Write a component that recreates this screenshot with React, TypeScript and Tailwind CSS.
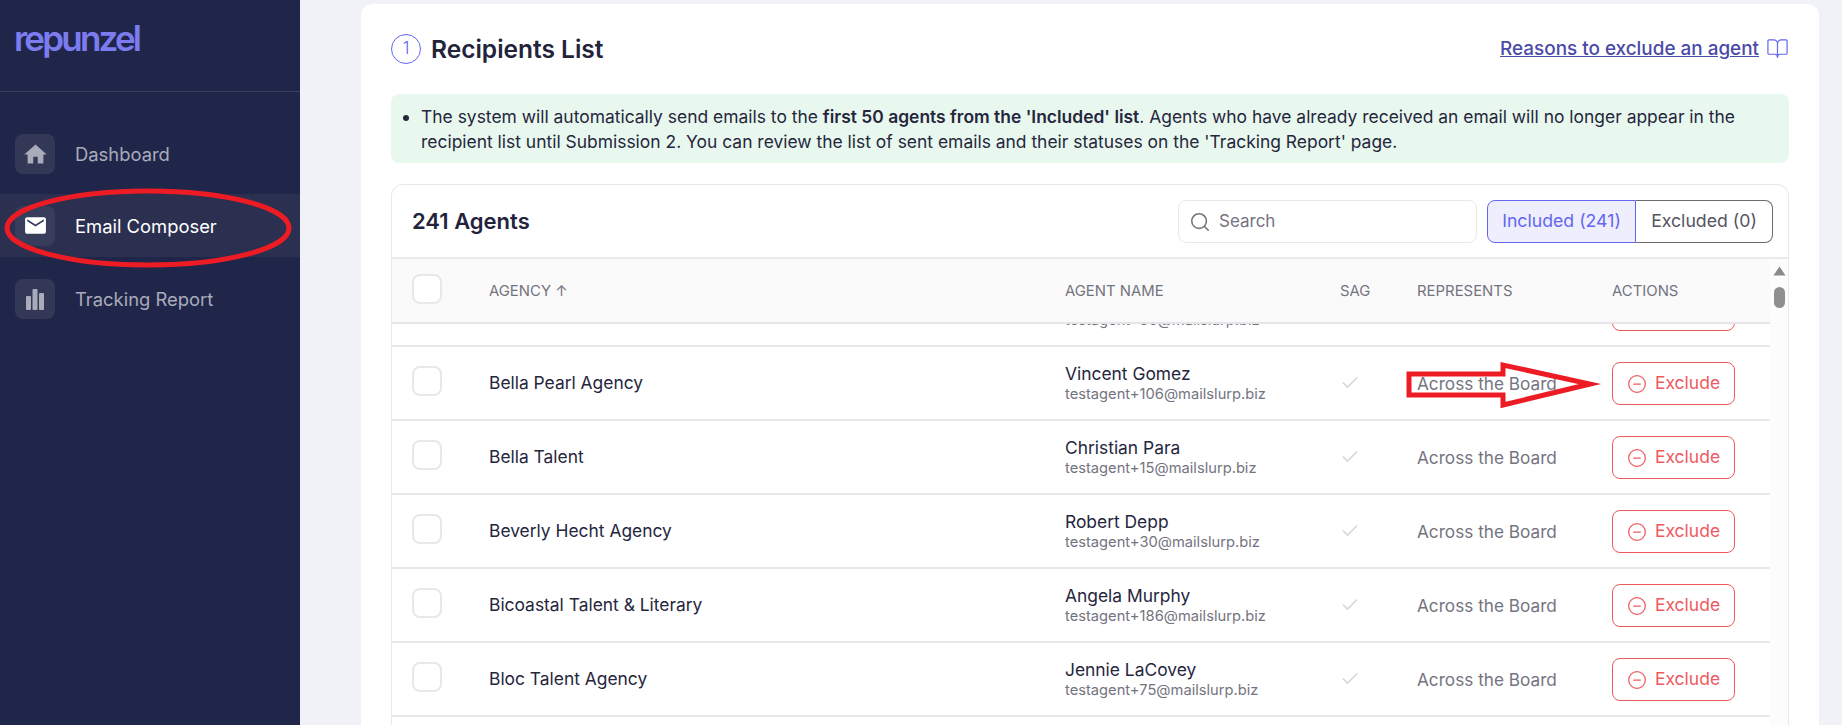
import { BookOpen, Check, CircleMinus, Search } from 'lucide-react';
import { MdEmail, MdHome } from 'react-icons/md';

const agents = [
  { agency: 'Bella Agency', name: 'Maria Lopez', email: 'testagent+56@mailslurp.biz' },
  { agency: 'Bella Pearl Agency', name: 'Vincent Gomez', email: 'testagent+106@mailslurp.biz' },
  { agency: 'Bella Talent', name: 'Christian Para', email: 'testagent+15@mailslurp.biz' },
  { agency: 'Beverly Hecht Agency', name: 'Robert Depp', email: 'testagent+30@mailslurp.biz' },
  { agency: 'Bicoastal Talent & Literary', name: 'Angela Murphy', email: 'testagent+186@mailslurp.biz' },
  { agency: 'Bloc Talent Agency', name: 'Jennie LaCovey', email: 'testagent+75@mailslurp.biz' },
];

const columns = 'grid grid-cols-[97px_576px_275px_77px_195px_160px] items-center';

function BarsIcon() {
  return (
    <svg width="20" height="22" viewBox="0 0 20 22" fill="currentColor">
      <rect x="1" y="8" width="5" height="14" rx="1" />
      <rect x="7.5" y="1" width="5" height="21" rx="1" />
      <rect x="14" y="5" width="5" height="17" rx="1" />
    </svg>
  );
}

function Sidebar() {
  return (
    <aside className="w-[300px] shrink-0 bg-[#20264a]">
      <div className="h-[92px] border-b border-[#3a3f5f] pl-[14px] pt-[13px]">
        <span className="text-[35px] font-semibold leading-[50px] tracking-[-2.8px] text-[#7c7cf0]">repunzel</span>
      </div>
      <nav className="pt-[42px] text-[18.4px] leading-[28px]">
        <div className="flex h-[40px] items-center gap-5 pl-[15px] text-[#a9abba]">
          <span className="flex h-10 w-10 items-center justify-center rounded-lg bg-[#333857]">
            <MdHome size={27} />
          </span>
          Dashboard
        </div>
        <div className="mt-5 flex h-[63px] items-center gap-5 bg-[#2c3050] pl-[15px] text-white">
          <span className="flex h-10 w-10 items-center justify-center rounded-lg bg-[#383d5c]">
            <MdEmail size={25} />
          </span>
          Email Composer
        </div>
        <div className="mt-[22px] flex h-[40px] items-center gap-5 pl-[15px] text-[#a9abba]">
          <span className="flex h-10 w-10 items-center justify-center rounded-lg bg-[#333857]">
            <BarsIcon />
          </span>
          Tracking Report
        </div>
      </nav>
    </aside>
  );
}

function Row({ agency, name, email }: { agency: string; name: string; email: string }) {
  return (
    <div className={`${columns} h-[74px] border-b-2 border-[#e9e9ec]`}>
      <div className="pl-5">
        <div className="-mt-1 h-[30px] w-[30px] rounded-lg border-2 border-[#e8e8ea] bg-white" />
      </div>
      <div className="pt-px text-[17.4px] text-[#26263d]">{agency}</div>
      <div className="-mt-0.5">
        <div className="text-[17.4px] leading-6 text-[#26263d]">{name}</div>
        <div className="text-[14.7px] leading-[17px] text-[#74747f]">{email}</div>
      </div>
      <div>
        <Check size={20} className="text-[#d8d8da]" />
      </div>
      <div className="whitespace-nowrap pt-px text-[17.2px] text-[#74747f]">Across the Board</div>
      <div>
        <button className="flex h-[43px] w-[123px] items-center justify-center gap-2 rounded-lg border border-[#ef5a5f] pt-px text-[17.5px] text-[#ef5a5f]">
          <CircleMinus size={20} strokeWidth={1.5} />
          Exclude
        </button>
      </div>
    </div>
  );
}

function AgentsTable() {
  return (
    <section className="mt-[21px] flex min-h-0 flex-1 flex-col rounded-t-xl border border-b-0 border-[#e9e9ec]">
      <div className="flex h-[74px] shrink-0 items-center border-b-2 border-[#e9e9ec] pl-5 pr-[15px]">
        <h2 className="text-[22px] font-semibold text-[#23233c]">241 Agents</h2>
        <div className="ml-auto flex h-[43px] w-[299px] items-center gap-2 rounded-lg border border-[#e9e9ec] pl-[10px] pt-px text-[17px] text-[#74747f]">
          <Search size={22} strokeWidth={1.75} />
          Search
        </div>
        <div className="ml-[10px] flex h-[43px] text-[17.7px]">
          <div className="flex w-[149px] items-center justify-center rounded-l-lg border border-[#6366f1] bg-[#eeeefc] pt-px text-[#6366f1]">
            Included (241)
          </div>
          <div className="flex w-[137px] items-center justify-center rounded-r-lg border border-l-0 border-[#6b6b6b] pt-px text-[#55555f]">
            Excluded (0)
          </div>
        </div>
      </div>
      <div className="flex min-h-0 flex-1">
        <div className="flex min-w-0 flex-1 flex-col">
          <div className={`${columns} relative z-10 h-[65px] shrink-0 border-b-2 border-[#e6e6e8] bg-[#fafafa] pt-px text-[14.9px] text-[#74747f]`}>
            <div className="pl-5">
              <div className="-mt-1 h-[30px] w-[30px] rounded-lg border-2 border-[#e8e8ea] bg-white" />
            </div>
            <div>AGENCY ↑</div>
            <div>AGENT NAME</div>
            <div>SAG</div>
            <div className="whitespace-nowrap">REPRESENTS</div>
            <div>ACTIONS</div>
          </div>
          <div className="min-h-0 flex-1 overflow-hidden">
            {/* list is scrolled down a bit in the reference */}
            <div className="-mt-[51px]">
              {agents.map((agent) => (
                <Row key={agent.email} {...agent} />
              ))}
            </div>
          </div>
        </div>
        <div className="flex w-[18px] shrink-0 flex-col items-center bg-[#fcfcfc] pt-[7px]">
          <svg width="13" height="10" viewBox="0 0 13 10" fill="#8a8a8a">
            <path d="M6.5 0.5 L12.5 9.5 H0.5 Z" />
          </svg>
          <div className="mt-[11px] h-[21px] w-[11px] rounded-md bg-[#8f8f8f]" />
        </div>
      </div>
    </section>
  );
}

// red marks someone drew on the screenshot
function Annotations() {
  return (
    <svg className="pointer-events-none absolute inset-0 z-20" width="1842" height="725" fill="none" stroke="#ed1c24" strokeWidth="5">
      <ellipse cx="148" cy="228" rx="141" ry="37" />
      <path d="M1409 374 H1503 V365 L1590 384 L1503 405 V395 H1409 Z" strokeLinejoin="miter" strokeMiterlimit="12" />
    </svg>
  );
}

export default function App() {
  return (
    <div className="relative flex h-[725px] overflow-hidden bg-[#f1f1f8] font-['Inter',sans-serif]">
      <Sidebar />
      <main className="min-w-0 flex-1 pl-[61px] pr-[23px] pt-1">
        <div className="flex h-[721px] flex-col rounded-t-xl bg-white pl-[30px] pr-[30px] pt-[30px]">
          <div className="flex h-[30px] shrink-0 items-center">
            <span className="flex h-[30px] w-[30px] items-center justify-center rounded-full border border-[#6366f1] text-[17px] font-light text-[#6366f1]">
              1
            </span>
            <h1 className="ml-[10px] text-[24.5px] font-semibold text-[#23233c]">Recipients List</h1>
            <a className="ml-auto flex items-center gap-[7px] text-[18.9px] font-medium text-[#4a4aa8]">
              <span className="underline">Reasons to exclude an agent</span>
              <BookOpen size={23} strokeWidth={1.25} className="text-[#6366f1]" />
            </a>
          </div>
          <div className="mt-[30px] flex h-[69px] shrink-0 rounded-lg bg-[#e8f8ef] pl-[30px] pr-4 pt-[10px] text-[17.45px] leading-[25px] text-[#26263d]">
            <ul className="list-disc">
              <li>
                The system will automatically send emails to the <b className="font-semibold">first 50 agents from the 'Included' list</b>. Agents who have already received an email will no longer appear in the recipient list until Submission 2. You can review the list of sent emails and their statuses on the 'Tracking Report' page.
              </li>
            </ul>
          </div>
          <AgentsTable />
        </div>
      </main>
      <Annotations />
    </div>
  );
}
